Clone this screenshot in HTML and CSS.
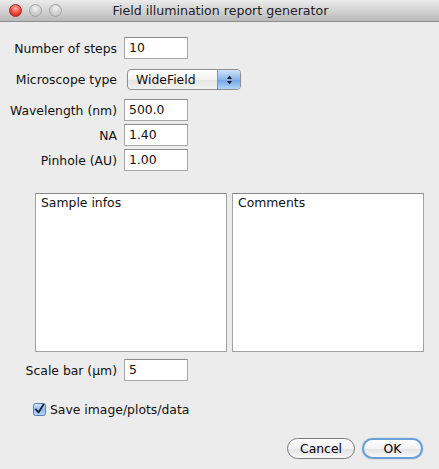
FILE: index.html
```html
<!DOCTYPE html>
<html>
<head>
<meta charset="utf-8">
<link rel="stylesheet" href="styles.css">
</head>
<body>
<div class="window">
  <div class="titlebar">
    <div class="lights">
      <span class="light red"></span>
      <span class="light"></span>
      <span class="light"></span>
    </div>
    <div class="title">Field illumination report generator</div>
  </div>
  <div class="content">
    <div class="row first">
      <label class="lbl">Number of steps</label>
      <div class="field">10</div>
    </div>
    <div class="row sel-row">
      <label class="lbl">Microscope type</label>
      <div class="select">
        <span class="sel-text">WideField</span>
        <span class="sel-arrows">
          <svg width="9" height="12" viewBox="0 0 9 12"><path d="M4.5 1.5 L7 5 H2 Z" fill="#1a1a1a"/><path d="M4.5 10.5 L7 7 H2 Z" fill="#1a1a1a"/></svg>
        </span>
      </div>
    </div>
    <div class="row wl">
      <label class="lbl">Wavelength (nm)</label>
      <div class="field">500.0</div>
    </div>
    <div class="row tight">
      <label class="lbl">NA</label>
      <div class="field">1.40</div>
    </div>
    <div class="row tight">
      <label class="lbl">Pinhole (AU)</label>
      <div class="field">1.00</div>
    </div>
    <div class="areas">
      <div class="area">Sample infos</div>
      <div class="area">Comments</div>
    </div>
    <div class="row scale">
      <label class="lbl">Scale bar (µm)</label>
      <div class="field">5</div>
    </div>
    <div class="check-row">
      <svg class="checkbox" width="13" height="13" viewBox="0 0 13 13">
        <defs>
          <linearGradient id="cb" x1="0" y1="0" x2="0" y2="1">
            <stop offset="0" stop-color="#d6e8fb"/>
            <stop offset="0.5" stop-color="#8fbcf0"/>
            <stop offset="1" stop-color="#b8d8fa"/>
          </linearGradient>
        </defs>
        <rect x="0.5" y="0.5" width="12" height="12" rx="2" fill="url(#cb)" stroke="#5a7fb0"/>
        <path d="M3 6.5 L5.5 9.5 L10.5 1.5" fill="none" stroke="#1c1c2a" stroke-width="1.8" stroke-linecap="round" stroke-linejoin="round"/>
      </svg>
      <span class="check-text">Save image/plots/data</span>
    </div>
    <div class="buttons">
      <button class="btn">Cancel</button>
      <button class="btn ok">OK</button>
    </div>
  </div>
</div>
</body>
</html>
```

FILE: styles.css
```css
html, body {
  margin: 0;
  padding: 0;
  background: #ececec;
}
.window {
  width: 439px;
  height: 469px;
  background: #ececec;
  font-family: "DejaVu Sans", "Liberation Sans", sans-serif;
  font-size: 12.4px;
  color: #111;
  overflow: hidden;
}
.titlebar {
  height: 22px;
  box-sizing: border-box;
  background: linear-gradient(#ebebeb, #d3d3d3 50%, #b9b9b9);
  border-bottom: 1px solid #8e8e8e;
  display: flex;
  align-items: center;
  position: relative;
}
.lights {
  display: flex;
  gap: 7px;
  padding-left: 9px;
  position: absolute;
  left: 0;
  top: 4px;
}
.light {
  width: 13px;
  height: 13px;
  border-radius: 50%;
  box-sizing: border-box;
  background: radial-gradient(circle at 50% 30%, #f3f3f3, #cfcfcf 55%, #bdbdbd);
  border: 1px solid #a4a4a4;
}
.light.red {
  background: radial-gradient(circle at 50% 30%, #ffb0a8, #f0443a 55%, #c41a12);
  border-color: #9e2a22;
}
.title {
  flex: 1;
  text-align: center;
  font-size: 12.6px;
  color: #222;
  padding-left: 2px;
}
.content {
  padding-top: 15px;
}
.row {
  display: flex;
  align-items: center;
}
.lbl {
  width: 117px;
  text-align: right;
  margin-right: 7px;
  white-space: nowrap;
}
.field {
  width: 64px;
  height: 22px;
  box-sizing: border-box;
  background: #fff;
  border: 1px solid #a7a7a7;
  border-top-color: #8c8c8c;
  padding-left: 4px;
  line-height: 20px;
}
.sel-row {
  margin-top: 10px;
}
.select {
  margin-left: 3px;
  width: 114px;
  height: 21px;
  box-sizing: border-box;
  border: 1px solid #8f8f8f;
  border-radius: 4px;
  background: linear-gradient(#ffffff, #f3f3f3 50%, #e4e4e4 51%, #f2f2f2);
  display: flex;
  overflow: hidden;
}
.sel-text {
  flex: 1;
  padding-left: 8px;
  line-height: 19px;
}
.sel-arrows {
  width: 22px;
  border-left: 1px solid #7c93b4;
  background: linear-gradient(#cde2f8, #8ab6ea 50%, #6ea3e4 51%, #b4d4f6);
  display: flex;
  align-items: center;
  justify-content: center;
}
.wl {
  margin-top: 9px;
}
.tight {
  margin-top: 3px;
}
.areas {
  display: flex;
  gap: 5px;
  margin-top: 22px;
  padding-left: 35px;
}
.area {
  width: 192px;
  height: 159px;
  box-sizing: border-box;
  background: #fff;
  border: 1px solid #a2a2a2;
  border-top-color: #8a8a8a;
  padding: 1px 5px;
}
.scale {
  margin-top: 7px;
}
.check-row {
  display: flex;
  align-items: center;
  margin-top: 20px;
  padding-left: 33px;
  height: 16px;
}
.checkbox {
  margin-right: 4px;
}
.buttons {
  display: flex;
  justify-content: flex-end;
  gap: 7px;
  margin-top: 21px;
  padding-right: 16px;
}
.btn {
  height: 21px;
  box-sizing: border-box;
  border: 1px solid #7a7a7a;
  border-radius: 11px;
  background: linear-gradient(#ffffff, #f2f2f2 50%, #e2e2e2 51%, #f7f7f7);
  font-family: "DejaVu Sans", "Liberation Sans", sans-serif;
  font-size: 12.4px;
  color: #000;
  padding: 0;
  width: 68px;
}
.btn.ok {
  width: 61px;
  border: 2px solid #6a9fd6;
  box-shadow: 0 0 1px #4a7fc0;
}
```
